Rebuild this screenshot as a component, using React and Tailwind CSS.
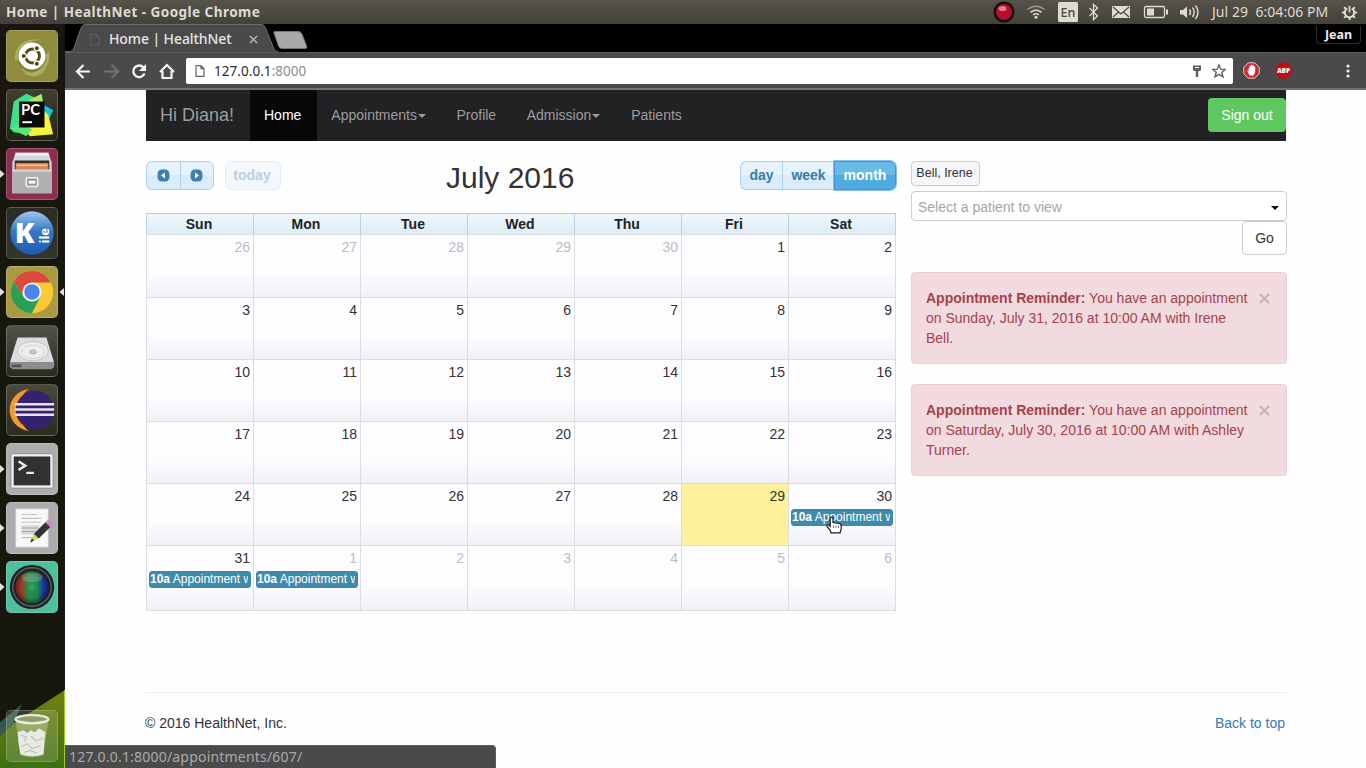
import React from "react";

const UBU = "font-['Noto_Sans','Open_Sans',sans-serif]";

/* ---------- launcher icons (52x52 tiles) ---------- */
const UbuntuIcon = () => (
  <svg viewBox="0 0 52 52" className="size-full">
    <path d="M8 30C8 12 22 6 38 10C26 8 14 14 14 32Z" fill="#c3c283" opacity=".6" />
    <path d="M44 22C46 38 34 48 16 45C30 46 40 38 40 24Z" fill="#c3c283" opacity=".6" />
    <path d="M14 36C20 46 34 46 42 36C36 52 18 50 14 36Z" fill="#b5b46b" opacity=".7" />
    <circle cx="26" cy="27" r="15" fill="#5d5c20" opacity=".4" />
    <circle cx="26" cy="26" r="14" fill="#fff" />
    <circle cx="26.500" cy="26" r="7.300" fill="none" stroke="#504c1c" strokeWidth="3" />
    <g stroke="#fff" strokeWidth="1.200" fill="#504c1c">
      <circle cx="17.400" cy="26" r="2.700" />
      <circle cx="31" cy="18" r="2.700" />
      <circle cx="31" cy="34" r="2.700" />
    </g>
  </svg>
);
const PyCharmIcon = () => (
  <svg viewBox="0 0 52 52" className="size-full">
    <path d="M7 12L20 4L32 9L22 46L7 44L3 40Z" fill="#3ee08c" />
    <path d="M22 11L36 4L38 16Z" fill="#a5ec5d" />
    <path d="M36 14L48 21L43 32Z" fill="#16c4dc" />
    <path d="M38 21L43 26L48 46L24 48L16 40Z" fill="#f4f43a" />
    <path d="M4 40L16 34L26 41L20 48Z" fill="#5be67a" />
    <rect x="12.500" y="12" width="26.500" height="27" fill="#0a0a0a" />
    <text x="14.500" y="26.500" fontSize="15.500" fontWeight="700" fill="#fff" fontFamily="Lato, sans-serif">PC</text>
    <rect x="16" y="32.500" width="10" height="2" fill="#fff" />
  </svg>
);
const FilesIcon = () => (
  <svg viewBox="0 0 52 52" className="size-full">
    <path d="M9 4H43L46.500 14V46H5.500V14Z" fill="#d6d6d6" />
    <path d="M9 4H43L44 7H8Z" fill="#efefef" />
    <path d="M8 12H44V22H8Z" fill="#3d2b25" />
    <path d="M9 14.500H43V22H9Z" fill="#d77f4d" />
    <path d="M10 16H42V18H10Z" fill="#f4c79d" />
    <path d="M5.500 21H46.500V46H5.500Z" fill="#b0b0b0" />
    <path d="M5.500 21H46.500V24H5.500Z" fill="#cdcdcd" />
    <rect x="20" y="30" width="12" height="9" rx="1.500" fill="#999" stroke="#f1f1f1" strokeWidth="1.600" />
    <rect x="22.500" y="33" width="7" height="3" fill="#fff" />
  </svg>
);
const KileIcon = () => (
  <svg viewBox="0 0 52 52" className="size-full">
    <defs>
      <linearGradient id="kile" x1="0" y1="0" x2="0" y2="1">
        <stop offset="0" stopColor="#9fc6ee" />
        <stop offset=".45" stopColor="#3579c6" />
        <stop offset="1" stopColor="#1d5db4" />
      </linearGradient>
    </defs>
    <circle cx="26" cy="26" r="22.500" fill="url(#kile)" />
    <text x="8" y="36.500" fontSize="30" fontWeight="800" fill="#fff" fontFamily="Open Sans, sans-serif">K</text>
    <text transform="translate(43.500 37) rotate(-90)" fontSize="13.500" fontWeight="700" fill="#fff" fontFamily="Open Sans, sans-serif">ile</text>
  </svg>
);
const ChromeIcon = () => (
  <svg viewBox="0 0 52 52" className="size-full">
    <circle cx="26" cy="26" r="22" fill="#fbc934" />
    <path d="M7 15A22 22 0 0 1 45.500 16H26L17.300 31Z" fill="#dc4a3e" />
    <path d="M7 15A22 22 0 0 0 26 48L34.700 31L26 26L17.300 31Z" fill="#2a9f58" />
    <circle cx="26" cy="26" r="10" fill="#f3f1ea" />
    <circle cx="26" cy="26" r="8" fill="#4a86ea" />
  </svg>
);
const DriveIcon = () => (
  <svg viewBox="0 0 52 52" className="size-full">
    <path d="M11 12H41L49 38H3Z" fill="#dcdcdc" />
    <path d="M3 38H49V43L46 45H6L3 43Z" fill="#8d8d8d" />
    <path d="M5 40H15V43H5Z" fill="#555" />
    <ellipse cx="27" cy="26" rx="16" ry="10" fill="#ececec" stroke="#c5c5c5" />
    <ellipse cx="27" cy="27" rx="12" ry="7" fill="none" stroke="#d5d5d5" />
    <ellipse cx="27" cy="27" rx="3.500" ry="2" fill="#ccc" stroke="#999" strokeWidth=".7" />
  </svg>
);
const EclipseIcon = () => (
  <svg viewBox="0 0 52 52" className="size-full">
    <path d="M23 4C-4 9 -4 43 23 48C10 40 10 12 23 4Z" fill="#f29a2e" />
    <circle cx="29" cy="26" r="20" fill="#34226f" />
    <path d="M8 20H49M8 25.500H49M8 31H49" stroke="#e6e2f2" strokeWidth="2.600" />
  </svg>
);
const TerminalIcon = () => (
  <svg viewBox="0 0 52 52" className="size-full">
    <rect x="4" y="10" width="44" height="36" rx="2" fill="#eee" stroke="#8b8b8b" />
    <rect x="7" y="13" width="38" height="30" fill="#2f3231" />
    <path d="M12 18L19 22.500L12 27" fill="none" stroke="#e8e8e8" strokeWidth="2.600" />
    <path d="M20 30H28" stroke="#e8e8e8" strokeWidth="2.400" />
  </svg>
);
const EditorIcon = () => (
  <svg viewBox="0 0 52 52" className="size-full">
    <rect x="9" y="6" width="34" height="40" fill="#f7f7f7" stroke="#c5c5c5" />
    <path d="M15 12H31M15 16H36M15 20H35M15 24H34M15 28H33M15 32H30M15 36H27" stroke="#c4c4c4" strokeWidth="1.100" />
    <path d="M15 26H33M15 30H30" stroke="#888" strokeWidth="1.100" />
    <path d="M24 41L28 32L33 37Z" fill="#d8d45a" />
    <path d="M28 32L40 20L45 25L33 37Z" fill="#343434" />
    <path d="M40 20L43 17L48 22L45 25Z" fill="#d783c4" />
    <path d="M24 41L26 37L28 39Z" fill="#222" />
  </svg>
);
const LensIcon = () => (
  <svg viewBox="0 0 52 52" className="size-full">
    <defs>
      <linearGradient id="lens" x1="0" y1="0" x2="1" y2="0">
        <stop offset="0" stopColor="#e02a2a" />
        <stop offset=".2" stopColor="#b8402e" />
        <stop offset=".38" stopColor="#2f9a4a" />
        <stop offset=".65" stopColor="#1b9a56" />
        <stop offset=".85" stopColor="#2733c8" />
        <stop offset="1" stopColor="#2733d8" />
      </linearGradient>
      <radialGradient id="lensShade">
        <stop offset="0" stopColor="#35c060" stopOpacity=".7" />
        <stop offset=".6" stopColor="#0b4527" stopOpacity=".15" />
        <stop offset="1" stopColor="#050505" stopOpacity=".5" />
      </radialGradient>
    </defs>
    <circle cx="26" cy="26" r="23" fill="#1d2022" />
    <circle cx="26" cy="26" r="20" fill="none" stroke="#5a5f60" strokeWidth="1.500" />
    <circle cx="26" cy="26" r="17" fill="url(#lens)" />
    <circle cx="26" cy="26" r="17" fill="url(#lensShade)" />
    <ellipse cx="26" cy="16" rx="11" ry="5" fill="#fff" opacity=".2" />
  </svg>
);
const TrashIcon = () => (
  <svg viewBox="0 0 52 52" className="size-full">
    <path d="M9 10L14 46Q26 50 38 46L43 10Z" fill="#cfdcb0" opacity=".4" />
    <path d="M11 22L17 20L21 23L25 20L29 22L33 18L40 22L39 30L38 45Q26 49 14 45L12 33Z" fill="#e9e9e6" />
    <path d="M14 25L20 27L18 32M25 26L30 31L38 28M15 37L21 34L26 39L35 36M18 43L24 41L31 44" fill="none" stroke="#c0c2ba" strokeWidth="1.200" />
    <ellipse cx="26" cy="8.500" rx="17" ry="4.200" fill="#8d9d6a" stroke="#e6ebdb" strokeWidth="2.500" />
  </svg>
);

const APPS = [
  { name: "ubuntu", Icon: UbuntuIcon, bg: "bg-[#8f8c3e]" },
  { name: "pycharm", Icon: PyCharmIcon, bg: "bg-linear-to-b from-[#3f3f33] to-[#24241a]" },
  { name: "files", Icon: FilesIcon, bg: "bg-[#8a2f50]", left: true },
  { name: "kile", Icon: KileIcon, bg: "bg-linear-to-b from-[#2b2c23] to-[#34352b]" },
  { name: "chrome", Icon: ChromeIcon, bg: "bg-[#aa9a42]", left: true, right: true },
  { name: "drive", Icon: DriveIcon, bg: "bg-linear-to-b from-[#53534b] to-[#2b2b22]" },
  { name: "eclipse", Icon: EclipseIcon, bg: "bg-linear-to-b from-[#4a4a3c] to-[#2b2c20]" },
  { name: "terminal", Icon: TerminalIcon, bg: "bg-[#adadad]", left: true },
  { name: "editor", Icon: EditorIcon, bg: "bg-[#acacac]", left: true },
  { name: "lens", Icon: LensIcon, bg: "bg-[#4fbf9d]", left: true },
];

const Tile = ({ Icon, bg, left, right }) => (
  <div className="flex h-[52px] w-full items-center">
    <svg className="h-2.5 w-[6px]" viewBox="0 0 6 10">{left && <path d="M0 1L4.500 5L0 9Z" fill="#e2e2e2" />}</svg>
    <div className={`size-[52px] shrink-0 overflow-hidden rounded-[5px] border border-white/20 ${bg}`}>
      <Icon />
    </div>
    <svg className="h-2.5 w-[7px]" viewBox="0 0 7 10">{right && <path d="M6 1L1.500 5L6 9Z" fill="#e2e2e2" />}</svg>
  </div>
);

const Launcher = () => (
  <aside className="relative flex w-[65px] shrink-0 flex-col justify-between bg-[#18170e] pt-[6px] pb-[6px]">
    <svg className="absolute bottom-0 left-0 h-[84px] w-[65px]" viewBox="0 0 65 84">
      <defs>
        <linearGradient id="hill" x1="0" y1="0" x2="0" y2="1">
          <stop offset="0" stopColor="#74800f" />
          <stop offset="1" stopColor="#3d6f14" />
        </linearGradient>
      </defs>
      <path d="M0 48L65 6V84H0Z" fill="url(#hill)" />
      <path d="M0 38Q10 30 22 20L12 42L0 52Z" fill="#33594b" />
      <path d="M64.500 6V84" stroke="#9ccb2b" />
    </svg>
    <div className="relative flex flex-col gap-[7px]">
      {APPS.map((a) => <Tile key={a.name} {...a} />)}
    </div>
    <div className="relative"><Tile Icon={TrashIcon} bg="bg-white/15" /></div>
  </aside>
);

/* ---------- system panel ---------- */
const Panel = () => (
  <header className={`flex h-6 shrink-0 items-center justify-between bg-linear-to-b from-[#56534b] to-[#43413b] text-[#dfdbd2] ${UBU}`}>
    <div className="pl-[6px] text-[13.500px] leading-6 font-bold tracking-[0.46px] whitespace-nowrap">Home | HealthNet - Google Chrome</div>
    <svg className="ml-auto h-6 w-[226px] shrink-0" viewBox="0 0 226 24">
      <circle cx="24" cy="12" r="10.500" fill="#15110f" />
      <circle cx="24" cy="12" r="8" fill="#b50f2c" />
      <ellipse cx="22.500" cy="8.500" rx="4" ry="2.600" fill="#f2a0aa" opacity=".75" />
      <g fill="none" stroke="#dfdbd2" strokeWidth="1.500">
        <path d="M47.500 9.500Q56 3 64.500 9.500" opacity=".55" />
        <path d="M50.500 12.300Q56 8 61.500 12.300" />
        <path d="M53 15Q56 12.700 59 15" />
      </g>
      <circle cx="56" cy="17.200" r="1.500" fill="#dfdbd2" />
      <rect x="78" y="2" width="20" height="20" rx="1.500" fill="#dfdbd2" />
      <text x="88" y="17" textAnchor="middle" fontSize="12.500" fontWeight="500" fill="#4a4842" fontFamily="Noto Sans, sans-serif">En</text>
      <path d="M109.500 8L117.500 16L113.500 19.500V4.500L117.500 8L109.500 16" fill="none" stroke="#dfdbd2" strokeWidth="1.300" />
      <rect x="132" y="6" width="18" height="12" rx=".5" fill="#dfdbd2" />
      <path d="M133 7L141 14L149 7M133 17L138.500 12M149 17L143.500 12" fill="none" stroke="#4a4842" strokeWidth="1.200" />
      <rect x="164.500" y="6.500" width="20" height="11" rx="1.500" fill="none" stroke="#dfdbd2" strokeWidth="1.300" />
      <rect x="167" y="8.500" width="7" height="7" fill="#dfdbd2" />
      <path d="M187 9.500V14.500" stroke="#dfdbd2" strokeWidth="2" />
      <path d="M200 10H203L207 6.500V18L203 14.500H200Z" fill="#dfdbd2" />
      <path d="M209.500 9.500Q211.500 12 209.500 15M212.500 7.500Q216 12 212.500 17M215.500 5.500Q220.500 12 215.500 19" fill="none" stroke="#dfdbd2" strokeWidth="1.400" />
    </svg>
    <div className="w-[127px] shrink-0 pl-[6px] text-[14px] leading-6 tracking-[0.05px] whitespace-nowrap">Jul 29&nbsp; 6:04:06 PM</div>
    <svg className="mr-[8px] ml-[8px] size-[17px] shrink-0" viewBox="0 0 18 18">
      <g fill="none" stroke="#dfdbd2">
        <path d="M6.600 4.700A5 5 0 1 0 11.400 4.700" strokeWidth="2.200" />
        <path d="M9 2V9" strokeWidth="1.800" />
        <path d="M1 9H4M14 9H17M3.300 3.300L5 5M13 5L14.700 3.300M3.300 14.700L5.200 12.800M12.800 12.800L14.700 14.700M9 14V17" strokeWidth="2" />
      </g>
    </svg>
  </header>
);

/* ---------- browser frame ---------- */
const PageGlyph = ({ className, stroke }) => (
  <svg className={className} viewBox="0 0 10 12">
    <path d="M1 .7H6L9 3.700V11.300H1ZM6 .7V3.700H9" fill="none" stroke={stroke} strokeWidth="1.200" />
  </svg>
);

const TabStrip = () => (
  <div className={`flex h-7 shrink-0 items-start justify-between bg-black ${UBU}`}>
    <div className="flex items-start">
      <div className="relative h-7 w-[213px]">
        <svg className="absolute inset-0 h-7 w-[213px]" viewBox="0 0 213 28">
          <path d="M0 28H4C7 28 8 26 9 24L16 4Q17.500 .5 20 .5H197Q199 .5 200.500 4L209 25Q210 28 213 28Z" fill="#4a4a4b" />
          <path d="M0 27.500H4C7 27.500 8 26 9 24L16 4Q17.500 .5 20 .5H197Q199 .5 200.500 4L209 25Q210 27.500 213 27.500" fill="none" stroke="#6c6c6d" />
        </svg>
        <div className="relative flex h-[30px] items-center pl-[25px]">
          <PageGlyph className="h-[13px] w-[10px]" stroke="#5a5a5a" />
          <span className="ml-[9px] w-[138px] text-[14px] leading-5 font-medium tracking-[-0.1px] whitespace-nowrap text-[#e4e4e4]">Home | HealthNet</span>
          <svg className="ml-[2px] size-[9px]" viewBox="0 0 9 9"><path d="M1 1L8 8M8 1L1 8" stroke="#b4b4b4" strokeWidth="1.500" /></svg>
        </div>
      </div>
      <svg className="mt-[7px] -ml-[5px] h-[18px] w-[36px]" viewBox="0 0 36 18">
        <path d="M2 .5H25Q28 .5 29 3L33.500 15Q34.500 17.500 32 17.500H9Q6.500 17.500 5.500 15L1 2Q.5 .5 2 .5Z" fill="#a9a9aa" stroke="#777" />
      </svg>
    </div>
    <div className="mt-[2px] mr-[5px] flex h-[18px] w-[45px] items-center justify-center rounded-b-[4px] border border-t-0 border-[#2e2e2e] pt-px text-[12.500px] font-bold text-[#ededed]">Jean</div>
  </div>
);

const Toolbar = () => (
  <div className={`flex h-[38px] shrink-0 items-center border-t border-b-2 border-t-[#5b5b5c] border-b-[#727273] bg-[#4a4a4b] ${UBU}`}>
    <svg className="mb-[2px] h-[34px] w-[121px]" viewBox="0 0 121 34">
      <path d="M25 18.500H12.500M18.500 12L12 18.500L18.500 25" fill="none" stroke="#f3f3f3" strokeWidth="2.200" />
      <path d="M39 18.500H52M46.500 12L53 18.500L46.500 25" fill="none" stroke="#717172" strokeWidth="2.200" />
      <path d="M78.500 14.500A5.800 5.800 0 1 0 79.500 20.500" fill="none" stroke="#f3f3f3" strokeWidth="2.300" />
      <path d="M81 11V18H74Z" fill="#f3f3f3" />
      <path d="M95 19L102 12L109 19M97.500 18V25H106.500V18" fill="none" stroke="#f3f3f3" strokeWidth="2.200" />
    </svg>
    <div className="flex h-[26px] w-[1047px] items-center rounded-[2px] bg-white">
      <PageGlyph className="ml-[9px] h-[12px] w-[10px]" stroke="#666" />
      <span className="ml-[9px] flex-1 text-[13.500px] leading-5 tracking-[0.050px] whitespace-nowrap text-[#8b8b8b]"><span className="text-[#2c2c2c]">127.0.0.1</span>:8000</span>
      <svg className="h-[14px] w-[10px]" viewBox="0 0 10 14">
        <path d="M1 1.500H9V5.500Q9 7 7.500 7H6.200V13H3.800V7H2.500Q1 7 1 5.500Z" fill="#5f5f5f" />
        <path d="M3 3.500H7" stroke="#fff" />
      </svg>
      <svg className="mr-[7px] ml-[10px] size-[14px]" viewBox="0 0 14 14">
        <path d="M7 1L8.800 5.200L13.300 5.500L9.800 8.400L11 12.800L7 10.400L3 12.800L4.200 8.400L.7 5.500L5.200 5.200Z" fill="none" stroke="#5f5f5f" strokeWidth="1.400" />
      </svg>
    </div>
    <svg className="ml-[10px] size-[17px]" viewBox="0 0 17 17">
      <path d="M5.300 .8H11.700L16.200 5.300V11.700L11.700 16.200H5.300L.8 11.700V5.300Z" fill="#d22630" stroke="#e9c7c7" />
      <path d="M5.500 5.500V9L4 8.200L6.500 13.500H10.500L12.200 10V4.500H11V7.500V3.500H9.500V7V2.800H8V7V3.800H6.500V7.500Z" fill="#fff" />
    </svg>
    <svg className="ml-[15px] size-[17px]" viewBox="0 0 17 17">
      <path d="M5.300 .5H11.700L16.500 5.300V11.700L11.700 16.500H5.300L.5 11.700V5.300Z" fill="#c00d10" />
      <text x="8.500" y="10.900" textAnchor="middle" fontSize="6.500" fontWeight="800" fill="#fff" fontFamily="Open Sans, sans-serif">ABP</text>
    </svg>
    <svg className="mr-[16px] ml-auto h-[14px] w-[4px]" viewBox="0 0 4 14">
      <circle cx="2" cy="2" r="1.600" fill="#f0f0f0" /><circle cx="2" cy="7" r="1.600" fill="#f0f0f0" /><circle cx="2" cy="12" r="1.600" fill="#f0f0f0" />
    </svg>
  </div>
);

/* ---------- HealthNet page ---------- */
const Caret = () => <span className="ml-[1px] inline-block border-x-4 border-t-4 border-x-transparent border-t-current align-middle" />;

const NavItem = ({ children, active }) => (
  <a className={`flex h-[51px] items-center px-[15px] pb-[2px] text-[14px] leading-5 whitespace-nowrap ${active ? "bg-[#080808] text-white" : "text-[#9d9d9d]"}`}>
    <span className="-ml-px pr-px">{children}</span>
  </a>
);

const NavBar = () => (
  <nav className="flex h-[51px] items-center bg-[#222123]">
    <a className="w-[104px] pb-[2px] pl-[14px] text-[18px] leading-5 whitespace-nowrap text-[#9d9d9d]">Hi Diana!</a>
    <NavItem active>Home</NavItem>
    <NavItem>Appointments<Caret /></NavItem>
    <div className="pl-[0.500px]"><NavItem>Profile</NavItem></div>
    <div className="pl-[0.500px]"><NavItem>Admission<Caret /></NavItem></div>
    <div className="pl-px"><NavItem>Patients</NavItem></div>
    <button className="mb-px ml-auto h-[34px] w-[78px] rounded-[4px] bg-[#5fc75f] text-[14px] text-white">Sign out</button>
  </nav>
);

const BTN = "flex h-[29px] items-center justify-center border border-[#aed0ea] bg-linear-to-b from-[#e6f2fc] from-50% to-[#daecf9] to-50% text-[14px] font-bold text-[#3a7ca5]";

const Arrow = ({ flip }) => (
  <svg className="mr-px size-[13px]" viewBox="0 0 13 13">
    <rect x=".5" y=".5" width="12" height="12" rx="4.500" fill="#3d80b3" />
    <path d={flip ? "M5 3.500L9 6.500L5 9.500Z" : "M8 3.500L4 6.500L8 9.500Z"} fill="#fff" />
  </svg>
);

const CalendarHeader = () => (
  <div className="flex h-[52px] items-start justify-between">
    <div className="flex w-[301px]">
      <button className={`${BTN} w-[34px] rounded-l-[6px] border-r-0`}><Arrow /></button>
      <button className={`${BTN} w-[34px] rounded-r-[6px]`}><Arrow flip /></button>
      <button className={`${BTN} ml-[11px] w-[56px] rounded-[6px] pr-[2px] opacity-35`}>today</button>
    </div>
    <h2 className="-ml-px h-[33px] w-[129px] text-[30px] leading-[33px] whitespace-nowrap text-[#333]">July 2016</h2>
    <div className="flex w-[321px] justify-end">
      <button className={`${BTN} w-[42px] rounded-l-[6px] border-r-0`}>day</button>
      <button className={`${BTN} w-[52px] border-r-0`}>week</button>
      <button className="flex h-[29px] w-[62px] items-center justify-center rounded-r-[6px] border border-[#3f8fe0] bg-linear-to-b from-[#67bce7] from-50% to-[#4fabde] to-50% text-[14px] font-bold text-white ring-1 ring-[#8fbdf0]">month</button>
    </div>
  </div>
);

const WEEKS = [
  { h: "h-[63px]", days: [26, 27, 28, 29, 30, 1, 2], dim: [0, 1, 2, 3, 4] },
  { h: "h-[62px]", days: [3, 4, 5, 6, 7, 8, 9] },
  { h: "h-[62px]", days: [10, 11, 12, 13, 14, 15, 16] },
  { h: "h-[62px]", days: [17, 18, 19, 20, 21, 22, 23] },
  { h: "h-[62px]", days: [24, 25, 26, 27, 28, 29, 30], today: 5, events: [6] },
  { h: "h-[65px]", days: [31, 1, 2, 3, 4, 5, 6], dim: [1, 2, 3, 4, 5, 6], events: [0, 1] },
];

const DayCell = ({ day, dim, today, event }) => (
  <div className={`flex min-w-0 flex-col border-t border-l pt-[2px] ${today ? "border-[#f3e373] bg-[#fdf29b]" : "border-[#dddde1] bg-linear-to-b from-[#fdfcff] from-60% to-[#f1f1f5]"}`}>
    <div className={`pr-[3px] text-right text-[14px] leading-5 ${dim ? "text-[#bcbcbf]" : "text-[#333]"}`}>{day}</div>
    {event && (
      <div className="mx-[2px] mt-[3px] h-[17px] overflow-hidden rounded-[3px] border border-[#3a87ad] bg-[#3f8bac] pr-[2px] text-[12px] leading-[14px] whitespace-nowrap text-white">
        <span className="block overflow-hidden"><b>10a</b> Appointment w</span>
      </div>
    )}
  </div>
);

const Calendar = () => (
  <section className="w-[750px] shrink-0">
    <CalendarHeader />
    <div className="border-r border-b border-[#dddde1]">
      <div className="-mr-px grid h-[21px] grid-cols-[repeat(7,107px)_1px] border-t border-[#aed0ea] bg-linear-to-b from-[#eff7fb] to-[#dcecf6]">
        {["Sun", "Mon", "Tue", "Wed", "Thu", "Fri", "Sat"].map((d) => (
          <div key={d} className="border-l border-[#b4d3ea] pr-[2px] text-center text-[14px] leading-5 font-bold text-[#222]">{d}</div>
        ))}
        <div className="bg-[#b4d3ea]" />
      </div>
      {WEEKS.map((w, i) => (
        <div key={i} className={`grid grid-cols-[repeat(7,107px)] ${w.h}`}>
          {w.days.map((d, j) => (
            <DayCell key={j} day={d} dim={w.dim?.includes(j)} today={w.today === j} event={w.events?.includes(j)} />
          ))}
        </div>
      ))}
    </div>
  </section>
);

const Alert = ({ lines }) => (
  <div className="flex h-[92px] items-start rounded-[4px] border border-[#ebccd1] bg-[#f2dbdf] pt-[15px] pl-[14px] text-[14px] leading-5 text-[#a5424b]">
    <p className="w-[331px] whitespace-nowrap">
      <b>Appointment Reminder:</b> {lines[0]}<br />{lines[1]}<br />{lines[2]}
    </p>
    <svg className="mt-[5px] ml-[2px] size-[11px]" viewBox="0 0 11 11"><path d="M1 1L10 10M10 1L1 10" stroke="#c5b3b6" strokeWidth="2" /></svg>
  </div>
);

const Sidebar = () => (
  <section className="flex w-[376px] shrink-0 flex-col">
    <button className="h-[25px] w-[69px] rounded-[4px] border border-[#ccc] bg-[#f6f5fa] pr-[2px] pb-px text-[12.500px] leading-[22px] whitespace-nowrap text-[#333]">Bell, Irene</button>
    <div className="mt-[5px] flex h-[30px] items-center justify-between rounded-[4px] border border-[#ccc] bg-white pr-[7px] pl-[7px] text-[14px] text-[#a6a6a6]">
      <span className="-ml-px pt-[3px]">Select a patient to view</span>
      <span className="mt-[3px] border-x-4 border-t-4 border-x-transparent border-t-black" />
    </div>
    <button className="h-[34px] w-[45px] self-end rounded-[4px] border border-[#ccc] bg-white text-[14px] text-[#333]">Go</button>
    <div className="mt-[17px] flex flex-col gap-5">
      <Alert lines={["You have an appointment", "on Sunday, July 31, 2016 at 10:00 AM with Irene", "Bell."]} />
      <Alert lines={["You have an appointment", "on Saturday, July 30, 2016 at 10:00 AM with Ashley", "Turner."]} />
    </div>
  </section>
);

const Pointer = () => (
  <svg className="absolute top-[426px] left-[761px] h-[18px] w-[16px]" viewBox="0 0 16 18">
    <path d="M4.500 1.500Q6.500 .5 7 2.500V6.500L13.500 7.500Q15.300 8 15.200 10V13L14 16.800H5L4 14L1 10.500Q.5 8.500 2.500 8.800L4.200 10.300V2.500Z" fill="#fff" stroke="#1b1b1b" strokeWidth="1.200" />
    <path d="M7.500 9.500V12M10 9.500V12M12.500 9.500V12" stroke="#777" />
  </svg>
);

export default function App() {
  return (
    <div className="flex h-[768px] w-[1366px] flex-col overflow-hidden bg-white font-['Liberation_Sans',Arial,sans-serif]">
      <Panel />
      <div className="flex min-h-0 flex-1">
        <Launcher />
        <div className="flex min-w-0 flex-1 flex-col">
          <TabStrip />
          <Toolbar />
          <main className="relative flex-1 bg-[#fefefe] pl-[81px]">
            <div className="w-[1140px]">
              <NavBar />
              <div className="mt-[20px] flex gap-[15px]">
                <Calendar />
                <Sidebar />
              </div>
              <footer className="mt-[81px] flex h-[60px] items-center justify-between border-t border-[#eee] text-[14px] leading-5 text-[#333]">
                <span className="-ml-px">© 2016 HealthNet, Inc.</span>
                <a className="pr-px text-[#337ab7]">Back to top</a>
              </footer>
            </div>
            <Pointer />
            <div className={`absolute bottom-0 left-0 h-[23px] w-[431px] rounded-tr-[4px] border-t border-r border-[#5f5f5f] bg-[#4a4a4b] pl-[4px] text-[14px] leading-[21px] tracking-[0.2px] whitespace-nowrap text-[#a9a9a9] ${UBU}`}>127.0.0.1:8000/appointments/607/</div>
          </main>
        </div>
      </div>
    </div>
  );
}
